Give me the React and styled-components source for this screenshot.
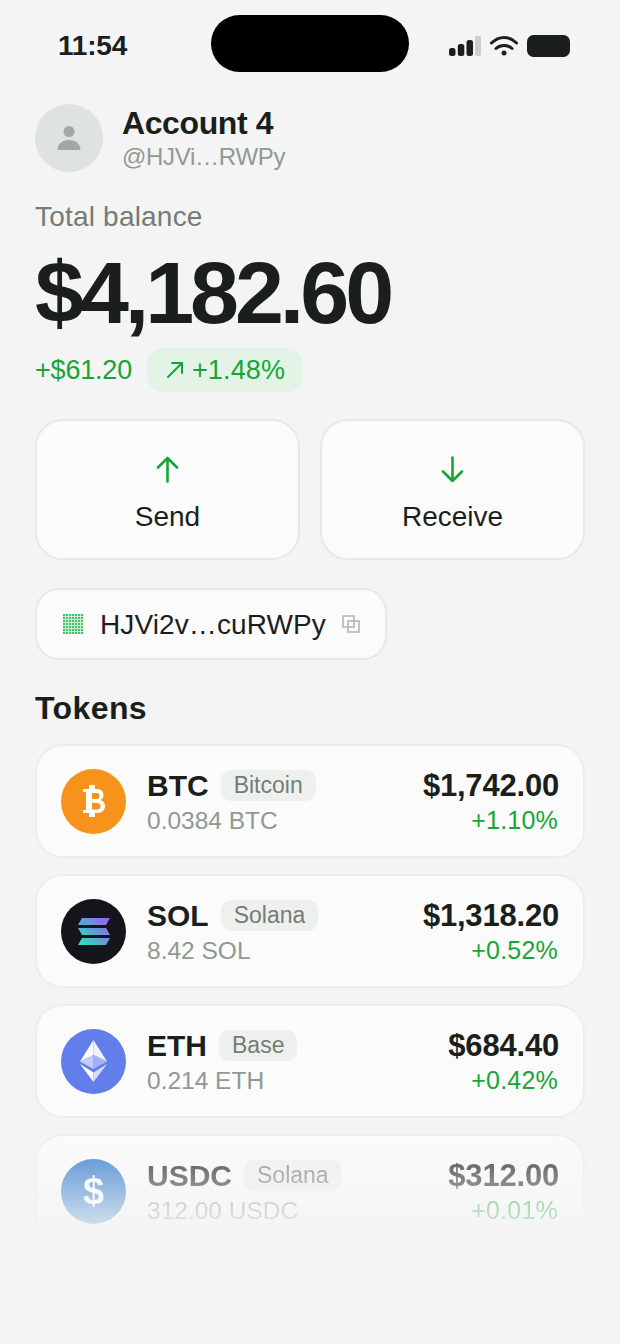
import React from "react"
import styled, {createGlobalStyle} from "styled-components"

const green = "#16a637"
const ink = "#1b1f1c"
const muted = "#8f9a92"

const Global = createGlobalStyle`
  html, body { margin: 0; padding: 0; background: #f4f4f4; }
  body { font-family: "Liberation Sans", Arial, sans-serif; color: ${ink}; }
`

const Screen = styled.div`
  width: 620px;
  height: 1344px;
  overflow: hidden;
  box-sizing: border-box;
  padding: 15px 35px 0;
  background: #f4f4f4;
`

const StatusBar = styled.div`
  display: grid;
  grid-template-columns: 176px 198px 1fr;
  align-items: center;
  height: 57px;
  padding-right: 15px;
`

const Clock = styled.div`
  margin: 5px 0 0 23px;
  font-size: 28px;
  font-weight: 700;
  letter-spacing: -0.2px;
`

const Island = styled.div`
  height: 57px;
  border-radius: 29px;
  background: #000;
`

const StatusIcons = styled.div`
  display: flex;
  align-items: center;
  justify-content: flex-end;
  gap: 9px;
  margin-top: 5px;
`

const Account = styled.div`
  display: flex;
  align-items: center;
  gap: 19px;
  margin-top: 32px;
`

const Avatar = styled.div`
  display: flex;
  align-items: center;
  justify-content: center;
  width: 68px;
  height: 68px;
  border-radius: 50%;
  background: #dfe3df;
`

const AccountName = styled.div`
  margin-top: -1px;
  font-size: 32px;
  line-height: 38px;
  font-weight: 700;
  letter-spacing: -0.4px;
`

const Handle = styled.div`
  font-size: 24px;
  line-height: 29px;
  letter-spacing: -0.3px;
  color: ${muted};
`

const BalanceLabel = styled.div`
  margin-top: 28px;
  font-size: 28px;
  line-height: 34px;
  letter-spacing: 0.2px;
  color: #737d75;
`

const Balance = styled.div`
  margin-top: 9px;
  font-size: 88px;
  line-height: 100px;
  font-weight: 700;
  letter-spacing: -4.05px;
`

const DeltaRow = styled.div`
  display: flex;
  align-items: center;
  gap: 15px;
  margin-top: 5px;
  font-size: 27px;
  color: ${green};
`

const DeltaAmount = styled.span`
  padding-top: 1px;
  letter-spacing: -0.2px;
`

const Pill = styled.div`
  display: flex;
  align-items: center;
  gap: 8px;
  height: 44px;
  padding: 0 18px 0 19px;
  border-radius: 16px;
  background: #e3f4e6;
  letter-spacing: 0.15px;
`

const Actions = styled.div`
  display: grid;
  grid-template-columns: 1fr 1fr;
  gap: 20px;
  margin-top: 27px;
`

const ActionButton = styled.div`
  display: flex;
  flex-direction: column;
  align-items: center;
  box-sizing: border-box;
  height: 141px;
  padding-top: 35px;
  border: 2px solid #e8e8e8;
  border-radius: 28px;
  background: #fbfbfb;
  font-size: 28px;
  line-height: 34px;
  & svg { margin-bottom: 17px; }
`

const AddressChip = styled.div`
  display: flex;
  align-items: center;
  box-sizing: border-box;
  width: 352px;
  height: 72px;
  margin-top: 28px;
  padding: 0 25px 0 26px;
  border: 2px solid #e8e8e8;
  border-radius: 24px;
  background: #fbfbfb;
  font-size: 28px;
`

const Address = styled.span`
  flex: 1;
  margin-left: 17px;
  padding-top: 2px;
  letter-spacing: 0.1px;
`

const Heading = styled.div`
  margin-top: 28px;
  font-size: 32px;
  line-height: 40px;
  font-weight: 700;
  letter-spacing: 0.4px;
`

const TokenList = styled.div`
  display: flex;
  flex-direction: column;
  gap: 16px;
  margin-top: 16px;
`

const Card = styled.div`
  display: flex;
  align-items: center;
  box-sizing: border-box;
  height: 114px;
  padding: 0 24px;
  border: 2px solid #ededed;
  border-radius: 28px;
  background: #fbfbfb;
  ${props => props.$fade ? "mask-image: linear-gradient(rgba(0,0,0,.87), transparent);" : ""}
`

const TokenIcon = styled.div`
  display: flex;
  align-items: center;
  justify-content: center;
  flex: none;
  width: 65px;
  height: 65px;
  border-radius: 50%;
  background: ${props => props.$bg};
`

const TokenInfo = styled.div`
  flex: 1;
  margin-left: 21px;
  padding-top: 2px;
`

const TokenTop = styled.div`
  display: flex;
  align-items: center;
  gap: 12px;
  height: 36px;
`

const Symbol = styled.span`
  font-size: 30px;
  font-weight: 700;
`

const Chain = styled.span`
  display: flex;
  align-items: center;
  height: 31px;
  padding: 0 13px;
  border-radius: 10px;
  background: #eef0ee;
  font-size: 23px;
  color: #737d75;
`

const Amount = styled.div`
  margin-top: 1px;
  font-size: 24.5px;
  line-height: 32px;
  color: ${muted};
`

const Values = styled.div`
  padding-top: 2px;
  text-align: right;
`

const Value = styled.div`
  font-size: 31px;
  line-height: 36px;
  font-weight: 700;
  letter-spacing: -0.2px;
`

const Change = styled.div`
  margin-right: 1px;
  font-size: 25px;
  line-height: 32px;
  letter-spacing: 0.2px;
  color: ${green};
`

const DollarMark = styled.span`
  font-size: 38px;
  font-weight: 700;
  color: #fff;
`

const SignalIcon = () => <svg width="32" height="22" viewBox="0 0 32 22">
  <rect x="0" y="13" width="6.5" height="8" rx="2.5" fill={ink} />
  <rect x="8.800" y="9" width="6.5" height="12" rx="2.5" fill={ink} />
  <rect x="17.500" y="5" width="6.5" height="16" rx="2.5" fill={ink} />
  <rect x="26" y="1" width="6" height="20" rx="2" fill="#c9cfc9" />
</svg>

const WifiIcon = () => <svg width="28" height="22" viewBox="0 0 28 22" fill="none" stroke={ink} strokeWidth="3" strokeLinecap="round">
  <path d="M1.5 8C9 .5 19 .5 26.500 8" />
  <path d="M6 13.500C10.500 9.500 17.500 9.500 22 13.500" />
  <circle cx="14" cy="18" r="2.5" fill={ink} stroke="none" />
</svg>

const BatteryIcon = () => <svg width="43" height="22" viewBox="0 0 43 22"><rect width="43" height="22" rx="6.5" fill={ink} /></svg>

const PersonIcon = () => <svg width="24" height="26" viewBox="0 0 24 26" fill="#a0aaa2">
  <circle cx="12" cy="6.500" r="5.500" />
  <path d="M0.500 25C0.500 19 5 15 12 15s11.500 4 11.500 10z" />
</svg>

const TrendIcon = () => <svg width="18" height="18" viewBox="0 0 18 18" fill="none" stroke={green} strokeWidth="2" strokeLinecap="round" strokeLinejoin="round">
  <path d="M2 16L16 2M6 2H16V12" />
</svg>

const UpIcon = () => <svg width="23" height="27" viewBox="0 0 23 27" fill="none" stroke={green} strokeWidth="2.600" strokeLinecap="round" strokeLinejoin="round">
  <path d="M11.500 25.500V2M2 11.500L11.500 2L21 11.500" />
</svg>

const DownIcon = () => <svg width="23" height="27" viewBox="0 0 23 27" fill="none" stroke={green} strokeWidth="2.600" strokeLinecap="round" strokeLinejoin="round">
  <path d="M11.500 1.500V25M2 15.500L11.500 25L21 15.500" />
</svg>

const QrIcon = () => <svg width="20" height="20" viewBox="0 0 20 20">
  <rect width="20" height="20" fill="#46c069" />
  <path d="M2.500 0v20M5.500 0v20M8.500 0v20M11.500 0v20M14.500 0v20M17.500 0v20M0 2.500h20M0 5.500h20M0 8.500h20M0 11.500h20M0 14.500h20M0 17.500h20" stroke="#cfeed8" strokeWidth="1" />
</svg>

const CopyIcon = () => <svg width="18" height="18" viewBox="0 0 18 18" fill="none" stroke="#b4bab5" strokeWidth="1.600">
  <rect x="1" y="1" width="11" height="11" />
  <rect x="6" y="6" width="11" height="11" />
</svg>

const BitcoinMark = () => <svg width="22" height="32" viewBox="0 0 22 32" fill="#fff">
  <path fillRule="evenodd" d="M6 0h6v4h2c4 0 6.500 2.200 6.500 6 0 2.300-1 4-3 5 3 1 4.500 3 4.500 6 0 4.200-3 7-7.500 7H12v4H6v-4H0v-3h3V7H0V4h6zM9 8v6h4.500c2 0 3-1 3-3s-1-3-3-3zM9 18v6.500h5c2.200 0 3.500-1.200 3.500-3.300 0-2-1.300-3.200-3.500-3.200z" />
</svg>

const SolanaMark = () => <svg width="32" height="27" viewBox="0 0 32 27">
  <defs>
    <linearGradient id="sol" gradientUnits="userSpaceOnUse" x1="2" y1="27" x2="30" y2="0">
      <stop offset="0" stopColor="#2fe0b4" />
      <stop offset=".5" stopColor="#5c9fd8" />
      <stop offset="1" stopColor="#a35cf0" />
    </linearGradient>
  </defs>
  <path d="M4 0H32L28 7H0zM0 10H28L32 17H4zM4 20H32L28 27H0z" fill="url(#sol)" />
</svg>

const EthMark = () => <svg width="27" height="42" viewBox="0 0 27 42">
  <path d="M13.500 0L0 21.500L13.500 15z" fill="#fff" />
  <path d="M13.500 0L27 21.500L13.500 15z" fill="#eef1fe" />
  <path d="M13.500 15L0 21.500L13.500 29z" fill="#c3cdfb" />
  <path d="M13.500 15L27 21.500L13.500 29z" fill="#a2b2f5" />
  <path d="M0 24L13.500 42V32.500z" fill="#fff" />
  <path d="M27 24L13.500 42V32.500z" fill="#d5dcfc" />
</svg>

const tokens = [
  {symbol: "BTC", chain: "Bitcoin", amount: "0.0384 BTC", value: "$1,742.00", change: "+1.10%", bg: "#f7931a", mark: <BitcoinMark />},
  {symbol: "SOL", chain: "Solana", amount: "8.42 SOL", value: "$1,318.20", change: "+0.52%", bg: "#14151a", mark: <SolanaMark />},
  {symbol: "ETH", chain: "Base", amount: "0.214 ETH", value: "$684.40", change: "+0.42%", bg: "#627eea", mark: <EthMark />},
  {symbol: "USDC", chain: "Solana", amount: "312.00 USDC", value: "$312.00", change: "+0.01%", bg: "#2775ca", mark: <DollarMark>$</DollarMark>, fade: true},
]

export default function App() {
  return <Screen>
    <Global />
    <StatusBar>
      <Clock>11:54</Clock>
      <Island />
      <StatusIcons>
        <SignalIcon />
        <WifiIcon />
        <BatteryIcon />
      </StatusIcons>
    </StatusBar>
    <Account>
      <Avatar><PersonIcon /></Avatar>
      <div>
        <AccountName>Account 4</AccountName>
        <Handle>@HJVi…RWPy</Handle>
      </div>
    </Account>
    <BalanceLabel>Total balance</BalanceLabel>
    <Balance>$4,182.60</Balance>
    <DeltaRow>
      <DeltaAmount>+$61.20</DeltaAmount>
      <Pill><TrendIcon />+1.48%</Pill>
    </DeltaRow>
    <Actions>
      <ActionButton><UpIcon />Send</ActionButton>
      <ActionButton><DownIcon />Receive</ActionButton>
    </Actions>
    <AddressChip>
      <QrIcon />
      <Address>HJVi2v…cuRWPy</Address>
      <CopyIcon />
    </AddressChip>
    <Heading>Tokens</Heading>
    <TokenList>
      {tokens.map(t => <Card key={t.symbol} $fade={t.fade}>
        <TokenIcon $bg={t.bg}>{t.mark}</TokenIcon>
        <TokenInfo>
          <TokenTop>
            <Symbol>{t.symbol}</Symbol>
            <Chain>{t.chain}</Chain>
          </TokenTop>
          <Amount>{t.amount}</Amount>
        </TokenInfo>
        <Values>
          <Value>{t.value}</Value>
          <Change>{t.change}</Change>
        </Values>
      </Card>)}
    </TokenList>
  </Screen>
}
